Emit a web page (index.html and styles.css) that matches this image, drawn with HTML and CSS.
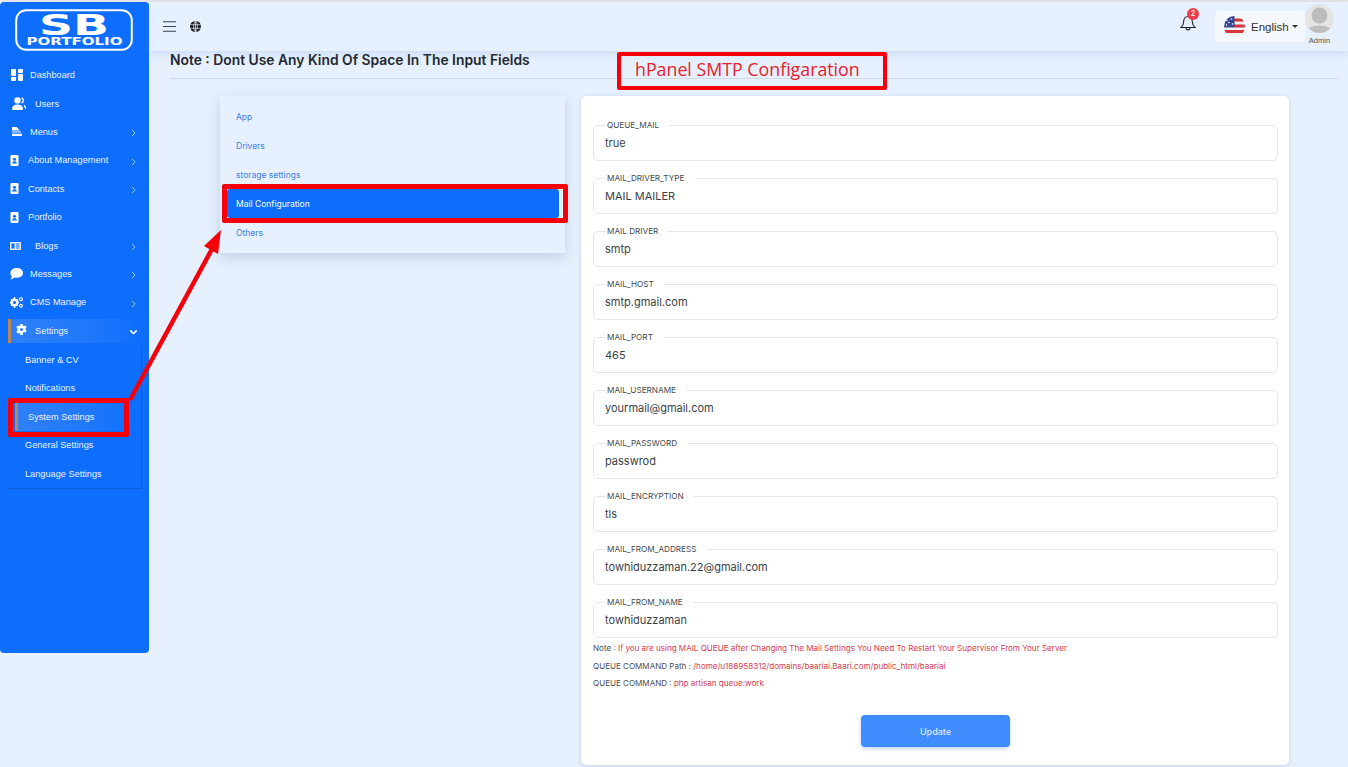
FILE: index.html
```html
<!DOCTYPE html>
<html lang="en">
<head>
<meta charset="utf-8">
<title>hPanel SMTP Configuration</title>
<link rel="stylesheet" href="styles.css">
</head>
<body>
<svg class="defs" width="0" height="0" aria-hidden="true">
  <symbol id="contact" viewBox="0 0 10 12"><rect x="0.5" y="0" width="9" height="12" rx="1.2" fill="#fff"/><circle cx="5" cy="4.6" r="1.7" fill="#0d6efd"/><path d="M2.4 9.4c.2-2 1.3-2.6 2.6-2.6s2.4.6 2.6 2.6z" fill="#0d6efd"/></symbol>
  <symbol id="chev" viewBox="0 0 6 10"><path d="M1 1l4 4-4 4" fill="none" stroke="currentColor"/></symbol>
</svg>
<div class="topline"></div>
<div class="app">
  <aside class="sidebar">
    <div class="logo">
      <svg width="118" height="43" viewBox="0 0 118 43">
        <rect x="1.2" y="1.2" width="115.6" height="39.6" rx="10" fill="none" stroke="#fff" stroke-width="2"/>
        <text x="59" y="25.5" text-anchor="middle" class="logo-sb" textLength="70" lengthAdjust="spacingAndGlyphs">SB</text>
        <text x="59.5" y="36" text-anchor="middle" class="logo-pf" textLength="96" lengthAdjust="spacingAndGlyphs">PORTFOLIO</text>
      </svg>
    </div>
    <nav>
      <a class="item p11 g7"><svg class="ic" width="12" height="12" viewBox="0 0 12 12"><path d="M0 1q0-1 1-1h3q1 0 1 1v5q0 1-1 1H1q-1 0-1-1zM7 1q0-1 1-1h3q1 0 1 1v2q0 1-1 1H8q-1 0-1-1zM7 6q0-1 1-1h3q1 0 1 1v5q0 1-1 1H8q-1 0-1-1zM0 9q0-1 1-1h3q1 0 1 1v2q0 1-1 1H1q-1 0-1-1z" fill="#fff"/></svg><span>Dashboard</span></a>
      <a class="item p12 g9"><svg class="ic" width="14" height="13" viewBox="0 0 14 13"><circle cx="5.5" cy="3.4" r="3.2" fill="#fff"/><path d="M0 12q0-4.6 5.5-4.6T11 12q0 1-1 1H1q-1 0-1-1z" fill="#fff"/><path d="M9.6.8a3 3 0 0 1 0 5.4M12 8.5q1.7 1.3 1.7 3.2" fill="none" stroke="#fff" stroke-width="1.4"/></svg><span>Users</span></a>
      <a class="item p12 g8 more"><svg class="ic" width="10" height="9" viewBox="0 0 10 9"><path d="M0 0h4.5L8 3.5H0zM0 4.6h9v1H0zM0 6.8h10V9H0z" fill="#fff"/></svg><span>Menus</span><svg class="chev" width="5" height="8"><use href="#chev"/></svg></a>
      <a class="item p10 g9 more"><svg class="ic" width="9" height="11"><use href="#contact"/></svg><span>About Management</span><svg class="chev" width="5" height="8"><use href="#chev"/></svg></a>
      <a class="item p10 g9 more"><svg class="ic" width="9" height="11"><use href="#contact"/></svg><span>Contacts</span><svg class="chev" width="5" height="8"><use href="#chev"/></svg></a>
      <a class="item p10 g9"><svg class="ic" width="9" height="11"><use href="#contact"/></svg><span>Portfolio</span></a>
      <a class="item p10 g14 more"><svg class="ic" width="11" height="8" viewBox="0 0 11 8"><path d="M0 0h11v8H0z" fill="#dbe8ff"/><path d="M1.5 1.5h3v5h-3zM6 1.5h3.5v1H6zM6 3.5h3.5v1H6zM6 5.500h3.500v1H6z" fill="#0d6efd"/></svg><span>Blogs</span><svg class="chev" width="5" height="8"><use href="#chev"/></svg></a>
      <a class="item p10 g7 more"><svg class="ic" width="13" height="12" viewBox="0 0 13 12"><path d="M6.800 0C10.200 0 13 2.100 13 4.900s-2.800 4.900-6.200 4.900c-.9 0-1.700-.1-2.500-.4C3.300 10.400 2 11.300.4 11.500c.8-.8 1.300-1.900 1.400-3C.9 7.600.4 6.300.4 4.900.4 2.100 3.300 0 6.800 0z" fill="#fff"/></svg><span>Messages</span><svg class="chev" width="5" height="8"><use href="#chev"/></svg></a>
      <a class="item p10 g7 more"><svg class="ic" width="13" height="11" viewBox="0 0 13 11"><circle cx="4.500" cy="5.500" r="2.800" fill="none" stroke="#fff" stroke-width="2.400"/><path d="M4.500 0v2M4.500 9v2M0 5.500h2M7 5.500h2M1.300 2.300l1.400 1.400M6.300 7.300l1.400 1.400M1.300 8.700l1.400-1.400M6.300 3.700l1.400-1.400" stroke="#fff" stroke-width="1.500"/><circle cx="11" cy="2.200" r="1.400" fill="none" stroke="#fff" stroke-width="1.100"/><circle cx="11" cy="8.800" r="1.400" fill="none" stroke="#fff" stroke-width="1.100"/></svg><span>CMS Manage</span><svg class="chev" width="5" height="8"><use href="#chev"/></svg></a>
      <a class="item open"><span class="open-in"><svg class="ic" width="11" height="11" viewBox="0 0 11 11"><path d="M4.400 0h2.200l.3 1.500 1.200.6 1.400-.6 1.100 1.900-1.100 1v1.200l1.100 1-1.100 1.900-1.400-.6-1.200.6L6.600 11H4.400l-.3-1.500-1.200-.6-1.400.6L.4 7.600l1.100-1V4.400l-1.100-1 1.100-1.900 1.400.6 1.200-.6z" fill="#fff"/><circle cx="5.500" cy="5.500" r="1.600" fill="#2f80f8"/></svg><span>Settings</span><svg class="chev down" width="5" height="8"><use href="#chev"/></svg></span></a>
      <div class="sub">
        <a class="sub-item">Banner &amp; CV</a>
        <a class="sub-item">Notifications</a>
        <a class="sub-item current"><span>System Settings</span></a>
        <a class="sub-item">General Settings</a>
        <a class="sub-item">Language Settings</a>
      </div>
    </nav>
  </aside>
  <div class="main">
    <header class="topbar">
      <div class="top-left">
        <svg width="13" height="11" viewBox="0 0 13 11"><path d="M0 .7h13M0 5.500h13M0 10.300h13" stroke="#3a4250" stroke-width="1.100"/></svg>
        <svg width="11" height="11" viewBox="0 0 11 11"><circle cx="5.500" cy="5.500" r="5.500" fill="#15181d"/><path d="M0 3.700h11M0 7.300h11M5.500 0v11M5.500 0C3 2 3 9 5.500 11M5.500 0C8 2 8 9 5.500 11" fill="none" stroke="#e6f0fe" stroke-width=".7"/></svg>
      </div>
      <div class="top-right">
        <div class="bell">
          <svg width="16" height="17" viewBox="0 0 16 17"><path d="M8 1.500c-3 0-4.300 2.300-4.300 5 0 3-1 4.600-2.700 6h14c-1.700-1.400-2.700-3-2.700-6 0-2.700-1.300-5-4.300-5zM6 13c0 2.500 4 2.500 4 0" fill="none" stroke="#20242b" stroke-width="1.100"/></svg>
          <span class="badge">2</span>
        </div>
        <div class="lang">
          <svg class="flag" width="21" height="21" viewBox="0 0 21 21"><defs><clipPath id="fc"><circle cx="10.500" cy="10.500" r="10.500"/></clipPath></defs><g clip-path="url(#fc)"><rect width="21" height="21" fill="#f2f2f2"/><path d="M10 2.500h11v3H10zM10 8.500h11v3H10zM0 14h21v3H0z" fill="#d8343f"/><rect width="10.500" height="11.500" fill="#33488f"/><g fill="#fff"><circle cx="3" cy="4.500" r=".8"/><circle cx="7.500" cy="3" r=".8"/><circle cx="5" cy="6.500" r=".8"/><circle cx="8.500" cy="8" r=".8"/><circle cx="2.500" cy="9" r=".8"/></g></g></svg>
          <span>English</span><i class="caret"></i>
        </div>
        <div class="admin">
          <svg width="29" height="29" viewBox="0 0 29 29"><defs><clipPath id="ac"><circle cx="14.500" cy="14.500" r="14.500"/></clipPath></defs><g clip-path="url(#ac)"><rect width="29" height="29" fill="#e4e4e4"/><circle cx="14.500" cy="11.500" r="8" fill="#bdbdbd"/><ellipse cx="14.500" cy="28" rx="13" ry="6.500" fill="#bdbdbd"/></g></svg>
          <span>Admin</span>
        </div>
      </div>
    </header>
    <div class="content">
      <h1 class="page-title">Note : Dont Use Any Kind Of Space In The Input Fields</h1>
      <div class="columns">
        <ul class="tabs">
          <li>App</li>
          <li>Drivers</li>
          <li>storage settings</li>
          <li class="active">Mail Configuration</li>
          <li>Others</li>
        </ul>
        <form class="card">
          <fieldset class="field"><legend>QUEUE_MAIL</legend><div class="value">true</div></fieldset>
          <fieldset class="field"><legend>MAIL_DRIVER_TYPE</legend><div class="value">MAIL MAILER</div></fieldset>
          <fieldset class="field"><legend>MAIL DRIVER</legend><div class="value">smtp</div></fieldset>
          <fieldset class="field"><legend>MAIL_HOST</legend><div class="value">smtp.gmail.com</div></fieldset>
          <fieldset class="field"><legend>MAIL_PORT</legend><div class="value">465</div></fieldset>
          <fieldset class="field"><legend>MAIL_USERNAME</legend><div class="value">yourmail@gmail.com</div></fieldset>
          <fieldset class="field"><legend>MAIL_PASSWORD</legend><div class="value">passwrod</div></fieldset>
          <fieldset class="field"><legend>MAIL_ENCRYPTION</legend><div class="value">tls</div></fieldset>
          <fieldset class="field"><legend>MAIL_FROM_ADDRESS</legend><div class="value">towhiduzzaman.22@gmail.com</div></fieldset>
          <fieldset class="field"><legend>MAIL_FROM_NAME</legend><div class="value">towhiduzzaman</div></fieldset>
          <div class="notes">
            <p>Note : <em>If you are using MAIL QUEUE after Changing The Mail Settings You Need To Restart Your Supervisor From Your Server</em></p>
            <p>QUEUE COMMAND Path : <em>/home/u186958312/domains/baariai.Baari.com/public_html/baariai</em></p>
            <p>QUEUE COMMAND : <em>php artisan queue:work</em></p>
          </div>
          <div class="actions"><button type="button" class="update">Update</button></div>
        </form>
      </div>
    </div>
  </div>
</div>
<div class="mark mark-title"><span>hPanel SMTP Configaration</span></div>
<div class="mark mark-tab"></div>
<div class="mark mark-nav"></div>
<svg class="arrow" width="1348" height="767" viewBox="0 0 1348 767" aria-hidden="true">
  <path d="M130 400L212 249" stroke="#f5000a" stroke-width="4.500" fill="none"/>
  <path d="M221 230L204 246L218 254Z" fill="#f5000a"/>
</svg>
</body>
</html>
```

FILE: styles.css
```css
* { box-sizing: border-box; }
html, body { margin: 0; height: 767px; overflow: hidden; }
body {
  position: relative;
  background: #e6f0fe;
  font-family: "Inter", "Liberation Sans", sans-serif;
  color: #2b2f36;
}
.defs { position: absolute; }
.topline { height: 2px; background: #e6e6e6; }
.app { display: flex; align-items: flex-start; }

/* Sidebar */
.sidebar {
  flex: 0 0 149px;
  height: 651px;
  background: #0d6efd;
  border-radius: 4px;
  font-family: "Liberation Sans", sans-serif;
  font-size: 9.200px;
  color: #eaf2ff;
}
.logo { height: 59px; padding: 7px 0 0 15px; }
.logo svg { display: block; }
.logo-sb { font: 900 28px "DejaVu Sans", sans-serif; fill: #fff; }
.logo-pf { font: 700 11px "DejaVu Sans", sans-serif; fill: #fff; }
.item {
  display: flex;
  align-items: center;
  height: 28.400px;
  position: relative;
}
.item.more { padding-right: 13px; }
.item .chev { margin-left: auto; margin-top: 3px; }
.chev { color: #a9cbff; stroke-width: 1.2; }
.p10 { padding-left: 10px; }
.p11 { padding-left: 11px; }
.p12 { padding-left: 12px; }
.g7 { gap: 7px; }
.g8 { gap: 8px; }
.g9 { gap: 9px; }
.g14 { gap: 14px; }
.open { height: 29.400px; padding: 2px 7px 3px 8px; }
.open-in {
  display: flex;
  align-items: center;
  gap: 8px;
  width: 100%;
  height: 24px;
  padding: 0 6px 0 5px;
  border-left: 3px solid #c08457;
  background: linear-gradient(90deg, #2f80f8, #1f78fb 60%, #0d6efd);
}
.open-in .ic { margin-bottom: 3px; }
.chev.down { margin-left: auto; margin-top: 2px; transform: rotate(90deg); color: #fff; stroke-width: 2; }
.sub {
  margin: 0 7px 0 8px;
  border-right: 1px solid #0b5ed7;
  border-bottom: 1px solid #0b5ed7;
}
.sub-item {
  display: flex;
  align-items: center;
  height: 28.400px;
  padding-left: 17px;
}
.sub-item.current { padding: 0 4px 0 7px; }
.sub-item.current span {
  display: flex;
  align-items: center;
  width: 100%;
  height: 28px;
  padding-left: 10px;
  border-left: 3px solid #c08457;
  background: linear-gradient(90deg, #2f80f8, #1f78fb 60%, #0d6efd);
}

/* Main */
.main { flex: 1; min-width: 0; padding-left: 1px; }
.topbar {
  display: flex;
  justify-content: space-between;
  align-items: center;
  height: 49px;
  padding: 0 14px 0 13px;
  background: #e6f0fe;
  box-shadow: 0 2px 8px rgba(110, 150, 220, .25);
  position: relative;
}
.top-left { display: flex; align-items: center; gap: 14px; }
.top-left svg { display: block; }
.top-right { display: flex; align-items: flex-start; align-self: flex-start; padding-top: 9px; }
.bell { position: relative; width: 16px; height: 17px; margin: 4px 19px 0 0; }
.bell svg { display: block; }
.badge {
  position: absolute;
  left: 7px;
  top: -7px;
  width: 12px;
  height: 12px;
  border-radius: 50%;
  background: #ee3d48;
  color: #fff;
  font-size: 7px;
  font-weight: 600;
  line-height: 12px;
  text-align: center;
}
.lang {
  display: flex;
  align-items: center;
  width: 90px;
  height: 31px;
  padding-left: 9px;
  border-radius: 5px;
  background: #f5f9ff;
  font-family: "Liberation Sans", sans-serif;
  font-size: 11.500px;
  color: #333;
}
.flag { margin-right: 6px; }
.caret {
  margin-left: 3px;
  border: 3px solid transparent;
  border-top-color: #333;
  border-bottom: 0;
}
.admin {
  display: flex;
  flex-direction: column;
  align-items: center;
  width: 29px;
  margin-top: -7px;
  font-family: "Liberation Sans", sans-serif;
  font-size: 7.500px;
  color: #555;
}
.admin svg { display: block; margin-bottom: 3px; }
.admin span { white-space: nowrap; }

.content { padding: 0 9px 0 20px; }
.page-title {
  margin: 0 0 17px;
  height: 28px;
  border-bottom: 1px solid #d3dbe6;
  font-size: 13.850px;
  line-height: 18px;
  font-weight: 600;
  color: #23272e;
}
.columns { display: flex; align-items: flex-start; gap: 16px; padding-left: 50px; }
.tabs {
  flex: 0 0 345px;
  margin: 0;
  padding: 6px 6px 6px 7px;
  list-style: none;
  background: #e6f0fe;
  box-shadow: 0 4px 12px rgba(90, 120, 170, .28);
  font-size: 8.500px;
  color: #3f7fe8;
}
.tabs li {
  display: flex;
  align-items: center;
  height: 29px;
  padding-left: 9px;
  border-radius: 3px;
}
.tabs .active { background: #0d6efd; color: #fff; }

.card {
  flex: 0 0 708px;
  height: 669px;
  padding: 23px 11px 0 12px;
  background: #fff;
  border-radius: 5px;
  box-shadow: 0 1px 4px rgba(90, 120, 170, .25);
}
.field {
  display: block;
  margin: 0 0 11px;
  padding: 0 11px;
  height: 42px;
  border: 1px solid #e3e6ea;
  border-radius: 5px;
  min-width: 0;
}
.field legend {
  margin-left: 1px;
  padding: 0 10px 0 1px;
  font-size: 8.200px;
  line-height: 12px;
  color: #454a52;
}
.value { font-size: 11px; line-height: 14px; padding-top: 5px; color: #3b3f46; }
.notes { margin-top: -9px; font-size: 8.050px; color: #4a4e55; }
.notes p { margin: 0; height: 17.500px; line-height: 17.500px; white-space: nowrap; }
.notes em { font-style: normal; color: #d5404e; }
.actions { display: flex; justify-content: center; margin-top: 22px; }
.update {
  width: 149px;
  height: 32px;
  border: 0;
  border-radius: 4px;
  background: #3f8cff;
  color: #dfeaff;
  font: 500 9px "Inter", sans-serif;
  padding-top: 2px;
  box-shadow: 0 2px 4px rgba(60, 110, 200, .3);
}

/* Annotations drawn over the screenshot */
.mark { position: absolute; border: 4px solid #f5000a; border-radius: 2px; }
.mark-title { left: 617px; top: 52px; width: 270px; height: 38px; }
.mark-title span {
  position: absolute;
  left: 14px;
  top: 2px;
  font: 17.800px/22px "Open Sans", sans-serif;
  color: #e8202a;
  white-space: nowrap;
}
.mark-tab { left: 222px; top: 184px; width: 346px; height: 39px; border-width: 5px; }
.mark-nav { left: 8px; top: 398px; width: 121px; height: 39px; border-width: 5px; }
.arrow { position: absolute; left: 0; top: 0; pointer-events: none; }
```
